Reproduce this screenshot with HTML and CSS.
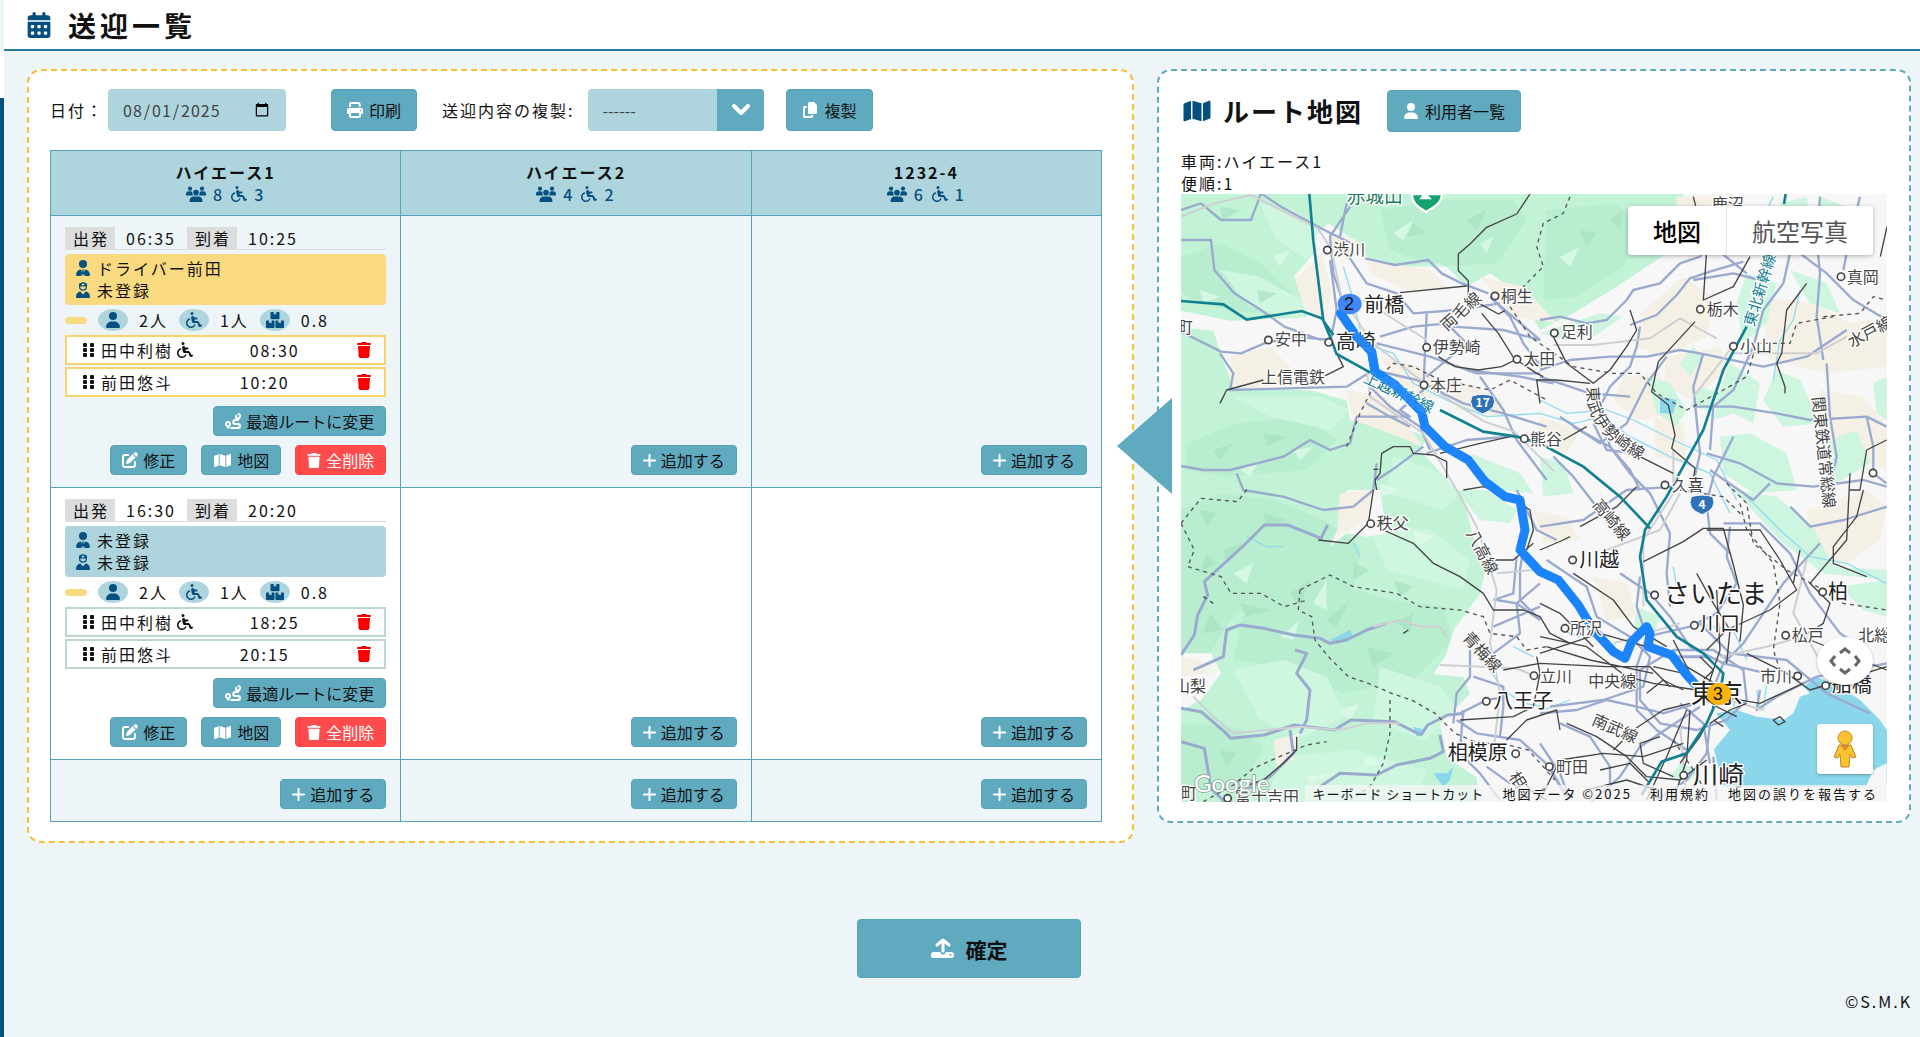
FILE: index.html
```html
<!DOCTYPE html>
<html lang="ja">
<head>
<meta charset="utf-8">
<title>送迎一覧</title>
<link rel="stylesheet" href="styles.css">
</head>
<body>
<svg class="defs" aria-hidden="true">
  <symbol id="calendar" viewBox="0 0 448 512"><path d="M128 0c17.700 0 32 14.300 32 32V64H288V32c0-17.700 14.300-32 32-32s32 14.300 32 32V64h48c26.500 0 48 21.500 48 48v48H0V112C0 85.500 21.500 64 48 64H96V32c0-17.700 14.300-32 32-32zM0 192H448V464c0 26.500-21.500 48-48 48H48c-26.500 0-48-21.500-48-48V192zm64 80v32c0 8.800 7.200 16 16 16h32c8.800 0 16-7.200 16-16V272c0-8.800-7.200-16-16-16H80c-8.800 0-16 7.200-16 16zm128 0v32c0 8.800 7.200 16 16 16h32c8.800 0 16-7.200 16-16V272c0-8.800-7.200-16-16-16H208c-8.800 0-16 7.200-16 16zm144-16c-8.800 0-16 7.200-16 16v32c0 8.800 7.200 16 16 16h32c8.800 0 16-7.200 16-16V272c0-8.800-7.200-16-16-16H336zM64 400v32c0 8.800 7.200 16 16 16h32c8.800 0 16-7.200 16-16V400c0-8.800-7.200-16-16-16H80c-8.800 0-16 7.200-16 16zm144-16c-8.800 0-16 7.200-16 16v32c0 8.800 7.200 16 16 16h32c8.800 0 16-7.200 16-16V400c0-8.800-7.200-16-16-16H208zm112 16v32c0 8.800 7.200 16 16 16h32c8.800 0 16-7.200 16-16V400c0-8.800-7.200-16-16-16H336c-8.800 0-16 7.200-16 16z"/></symbol>
  <symbol id="print" viewBox="0 0 512 512"><path d="M128 0C92.700 0 64 28.700 64 64v96h64V64H354.700L384 93.300V160h64V93.300c0-17-6.700-33.300-18.700-45.300L400 18.700C388 6.700 371.700 0 354.700 0H128zM384 352v96H128V352H384zm64 32h32c17.700 0 32-14.300 32-32V256c0-35.300-28.700-64-64-64H64c-35.300 0-64 28.700-64 64v96c0 17.700 14.300 32 32 32H64v64c0 35.300 28.700 64 64 64H384c35.300 0 64-28.700 64-64V384zM432 248a24 24 0 1 1 0 48 24 24 0 1 1 0-48z"/></symbol>
  <symbol id="copy" viewBox="0 0 448 512"><path d="M208 0H332c13 0 25 5 34 14l68 68c9 9 14 21 14 34V336c0 26-22 48-48 48H208c-26 0-48-22-48-48V48c0-26 22-48 48-48zM48 128h80v64H64V448H256V416h64v48c0 26-22 48-48 48H48c-26 0-48-22-48-48V176c0-26 22-48 48-48z"/></symbol>
  <symbol id="user" viewBox="0 0 448 512"><path d="M224 256A128 128 0 1 0 224 0a128 128 0 1 0 0 256zm-46 48C80 304 0 384 0 482c0 17 13 30 30 30H418c17 0 30-13 30-30C448 384 368 304 270 304H178z"/></symbol>
  <symbol id="map" viewBox="0 0 576 512"><path d="M384 476L192 421V36L384 91V476zm32-1V88L543 37c16-6 33 6 33 23V395c0 9-6 18-15 22L416 475zM15 95L160 37V424L33 475C17 481 0 469 0 452V117c0-9 6-18 15-22z"/></symbol>
  <symbol id="trash" viewBox="0 0 448 512"><path d="M135 18L128 32H32C14 32 0 46 0 64S14 96 32 96H416c18 0 32-14 32-32s-14-32-32-32H320l-7-14C307 7 296 0 284 0H164c-12 0-23 7-29 18zM416 128H32L53 467c2 25 23 45 48 45H347c25 0 46-20 48-45L416 128z"/></symbol>
  <symbol id="plus" viewBox="16 48 416 416"><path d="M256 80c0-18-14-32-32-32s-32 14-32 32V224H48c-18 0-32 14-32 32s14 32 32 32H192V432c0 18 14 32 32 32s32-14 32-32V288H400c18 0 32-14 32-32s-14-32-32-32H256V80z"/></symbol>
  <symbol id="edit" viewBox="0 0 512 512"><path d="M471.600 21.700c-21.900-21.900-57.300-21.900-79.200 0L362.300 51.700l97.900 97.900 30.100-30.100c21.900-21.900 21.900-57.300 0-79.200L471.600 21.700zm-299.200 220c-6.100 6.100-10.800 13.600-13.500 21.900l-29.600 88.800c-2.900 8.600-.6 18.100 5.800 24.600s15.900 8.700 24.600 5.800l88.800-29.600c8.200-2.700 15.700-7.400 21.900-13.500L437.700 172.300 339.700 74.300 172.400 241.700zM96 64C43 64 0 107 0 160V416c0 53 43 96 96 96H352c53 0 96-43 96-96V320c0-17.700-14.300-32-32-32s-32 14.300-32 32v96c0 17.700-14.300 32-32 32H96c-17.700 0-32-14.300-32-32V160c0-17.700 14.300-32 32-32h96c17.700 0 32-14.300 32-32s-14.300-32-32-32H96z"/></symbol>
  <symbol id="wheelchair" viewBox="0 0 512 512"><path d="M192 96a48 48 0 1 0 0-96 48 48 0 1 0 0 96zM120.500 247.200c12.400-4.700 18.700-18.500 14-30.900s-18.500-18.700-30.900-14C43.100 225.100 0 283.500 0 352c0 88.400 71.600 160 160 160c61.200 0 114.300-34.300 141.200-84.700c6.200-11.700 1.800-26.200-9.900-32.500s-26.200-1.800-32.500 9.900C240 440 202.800 464 160 464C98.100 464 48 413.900 48 352c0-47.900 30.100-88.800 72.500-104.800zM259.800 176l-1.900-9.700c-4.500-22.300-24-38.300-46.800-38.300c-30.100 0-52.700 27.500-46.800 57l23.100 115.500c6 29.900 32.200 51.400 62.800 51.400h100.500c6.700 0 12.600 4.100 15 10.400L402 459.200c6 16.100 23.800 24.600 40.100 19.100l48-16c16.800-5.600 25.800-23.700 20.200-40.500s-23.700-25.800-40.500-20.200l-18.700 6.200-25.500-68c-11.700-31.200-41.600-51.900-74.900-51.900H282.200l-9.600-48H336c17.700 0 32-14.300 32-32s-14.300-32-32-32H259.800z"/></symbol>
  <symbol id="users" viewBox="0 0 640 512"><circle cx="128" cy="84" r="68"/><circle cx="512" cy="84" r="68"/><circle cx="320" cy="212" r="90"/><path d="M0 250c0-50 40-82 82-82h64c24 0 46 10 60 24-10 46 0 86 28 114H22c-12 0-22-10-22-22zM640 250c0-50-40-82-82-82h-64c-24 0-46 10-60 24 10 46 0 86-28 114h212c12 0 22-10 22-22zM112 476c0-78 58-142 134-142h148c76 0 134 64 134 142 0 20-12 36-32 36H144c-20 0-32-16-32-36z"/></symbol>
  <symbol id="tie" viewBox="0 0 448 512"><circle cx="224" cy="128" r="128"/><path d="M150 300C66 312 0 386 0 474c0 22 14 38 36 38h134l30-118zM298 300c84 12 150 86 150 174 0 22-14 38-36 38H278l-30-118zM184 300h80l-22 44 20 90-38 78-38-78 20-90z"/></symbol>
  <symbol id="nurse" viewBox="0 0 448 512"><path fill-rule="evenodd" d="M96 60C96 44 224 0 224 0s128 44 128 60v90a128 128 0 0 1-256 0zm40 84v10a88 88 0 0 0 176 0v-10zM208 40v26h-26v26h26v26h32V92h26V66h-26V40z"/><path d="M134 306l90 94 90-94c76 10 134 78 134 164 0 26-14 42-36 42H36c-22 0-36-16-36-42 0-86 58-154 134-164z"/></symbol>
  <symbol id="boxes" viewBox="0 0 576 512"><path d="M170 0h76v84l42-26 42 26V0h76c16 0 26 10 26 26v180c0 16-10 26-26 26H170c-16 0-26-10-26-26V26c0-16 10-26 26-26zM26 272h72v90l42-26 42 26v-90h66c16 0 26 10 26 26v188c0 16-10 26-26 26H26c-16 0-26-10-26-26V298c0-16 10-26 26-26zM328 272h66v90l42-26 42 26v-90h72c16 0 26 10 26 26v188c0 16-10 26-26 26H328c-16 0-26-10-26-26V298c0-16 10-26 26-26z"/></symbol>
  <symbol id="route" viewBox="0 0 512 512"><path fill-rule="evenodd" d="M416 0a96 96 0 0 1 96 96c0 50-60 130-96 160H328a28 28 0 0 0 0 64h88a96 96 0 0 1 0 192H140c18-20 34-42 46-64h230a30 30 0 0 0 0-64h-88a92 92 0 0 1 0-192h8c-10-22-16-40-16-56a96 96 0 0 1 96-96zm0 58a38 38 0 1 0 1 0zM96 256a96 96 0 0 1 96 96c0 54-62 124-96 160-34-36-96-106-96-160a96 96 0 0 1 96-96zm0 60a36 36 0 1 0 1 0z"/></symbol>
  <symbol id="grip" viewBox="0 0 12 14"><rect width="4" height="4" rx="1"/><rect x="7" width="4" height="4" rx="1"/><rect y="5" width="4" height="4" rx="1"/><rect x="7" y="5" width="4" height="4" rx="1"/><rect y="10" width="4" height="4" rx="1"/><rect x="7" y="10" width="4" height="4" rx="1"/></symbol>
  <symbol id="chevron" viewBox="0 0 20 14"><path d="M3 3l7 7 7-7" fill="none" stroke="currentColor" stroke-width="4" stroke-linecap="round" stroke-linejoin="round"/></symbol>
  <symbol id="upload" viewBox="0 0 23 21"><path fill-rule="evenodd" d="M3 14h17a3 3 0 0 1 3 3v1a2 2 0 0 1-2 2H2a2 2 0 0 1-2-2v-1a3 3 0 0 1 3-3zm16 2a1 1 0 1 0 1 0z"/><path d="M12 14V3" fill="none" stroke="#60aac0" stroke-width="5" stroke-linecap="round"/><path d="M12 13V2M6 7l6-5 6 5" fill="none" stroke="currentColor" stroke-width="3" stroke-linecap="round" stroke-linejoin="round"/></symbol>
</svg>

<div class="app">
  <aside class="side-edge"></aside>
  <div class="page">
    <header class="page-header">
      <svg class="icon-title"><use href="#calendar"/></svg>
      <h1>送迎一覧</h1>
    </header>

    <main class="content">
      <div class="panels">
        <section class="panel panel-schedule">
          <form class="toolbar">
            <label for="date">日付：</label>
            <input class="date" id="date" type="date" value="2025-08-01">
            <button class="btn btn-lg btn-print" type="button"><svg class="ico"><use href="#print"/></svg>印刷</button>
            <label class="copy-label" for="source">送迎内容の複製:</label>
            <span class="select-box">
              <select id="source"><option>------</option></select>
              <span class="select-arrow"><svg class="ico-chevron"><use href="#chevron"/></svg></span>
            </span>
            <button class="btn btn-lg btn-copy" type="button"><svg class="ico"><use href="#copy"/></svg>複製</button>
          </form>

          <table class="schedule">
            <thead>
              <tr>
                <th scope="col">ハイエース1<span class="capacity"><svg class="ico-users"><use href="#users"/></svg>8<svg class="ico"><use href="#wheelchair"/></svg>3</span></th>
                <th scope="col">ハイエース2<span class="capacity"><svg class="ico-users"><use href="#users"/></svg>4<svg class="ico"><use href="#wheelchair"/></svg>2</span></th>
                <th scope="col">1232-4<span class="capacity"><svg class="ico-users"><use href="#users"/></svg>6<svg class="ico"><use href="#wheelchair"/></svg>1</span></th>
              </tr>
            </thead>
            <tbody>
              <tr>
                <td>
                  <div class="times"><span class="tag">出発</span><span>06:35</span><span class="tag">到着</span><span>10:25</span></div>
                  <div class="crew crew-active">
                    <div><svg class="ico"><use href="#tie"/></svg>ドライバー前田</div>
                    <div><svg class="ico"><use href="#nurse"/></svg>未登録</div>
                  </div>
                  <div class="counts"><i class="dash"></i><span class="oval"><svg class="ico"><use href="#user"/></svg></span><span>2人</span><span class="oval"><svg class="ico"><use href="#wheelchair"/></svg></span><span>1人</span><span class="oval"><svg class="ico-users"><use href="#boxes"/></svg></span><span>0.8</span></div>
                  <ul class="riders riders-active">
                    <li><span class="rider"><svg class="ico-grip"><use href="#grip"/></svg>田中利樹<svg class="ico"><use href="#wheelchair"/></svg></span><span>08:30</span><button class="remove" type="button" aria-label="削除"><svg class="ico"><use href="#trash"/></svg></button></li>
                    <li><span class="rider"><svg class="ico-grip"><use href="#grip"/></svg>前田悠斗</span><span>10:20</span><button class="remove" type="button" aria-label="削除"><svg class="ico"><use href="#trash"/></svg></button></li>
                  </ul>
                  <div class="actions"><button class="btn" type="button"><svg class="ico"><use href="#route"/></svg>最適ルートに変更</button></div>
                  <div class="actions"><button class="btn" type="button"><svg class="ico"><use href="#edit"/></svg>修正</button><button class="btn" type="button"><svg class="ico-map"><use href="#map"/></svg>地図</button><button class="btn btn-danger" type="button"><svg class="ico-trash"><use href="#trash"/></svg>全削除</button></div>
                </td>
                <td><div class="actions"><button class="btn" type="button"><svg class="ico-plus"><use href="#plus"/></svg>追加する</button></div></td>
                <td><div class="actions"><button class="btn" type="button"><svg class="ico-plus"><use href="#plus"/></svg>追加する</button></div></td>
              </tr>
              <tr>
                <td>
                  <div class="times"><span class="tag">出発</span><span>16:30</span><span class="tag">到着</span><span>20:20</span></div>
                  <div class="crew">
                    <div><svg class="ico"><use href="#tie"/></svg>未登録</div>
                    <div><svg class="ico"><use href="#nurse"/></svg>未登録</div>
                  </div>
                  <div class="counts"><i class="dash"></i><span class="oval"><svg class="ico"><use href="#user"/></svg></span><span>2人</span><span class="oval"><svg class="ico"><use href="#wheelchair"/></svg></span><span>1人</span><span class="oval"><svg class="ico-users"><use href="#boxes"/></svg></span><span>0.8</span></div>
                  <ul class="riders">
                    <li><span class="rider"><svg class="ico-grip"><use href="#grip"/></svg>田中利樹<svg class="ico"><use href="#wheelchair"/></svg></span><span>18:25</span><button class="remove" type="button" aria-label="削除"><svg class="ico"><use href="#trash"/></svg></button></li>
                    <li><span class="rider"><svg class="ico-grip"><use href="#grip"/></svg>前田悠斗</span><span>20:15</span><button class="remove" type="button" aria-label="削除"><svg class="ico"><use href="#trash"/></svg></button></li>
                  </ul>
                  <div class="actions"><button class="btn" type="button"><svg class="ico"><use href="#route"/></svg>最適ルートに変更</button></div>
                  <div class="actions"><button class="btn" type="button"><svg class="ico"><use href="#edit"/></svg>修正</button><button class="btn" type="button"><svg class="ico-map"><use href="#map"/></svg>地図</button><button class="btn btn-danger" type="button"><svg class="ico-trash"><use href="#trash"/></svg>全削除</button></div>
                </td>
                <td><div class="actions"><button class="btn" type="button"><svg class="ico-plus"><use href="#plus"/></svg>追加する</button></div></td>
                <td><div class="actions"><button class="btn" type="button"><svg class="ico-plus"><use href="#plus"/></svg>追加する</button></div></td>
              </tr>
              <tr>
                <td><div class="actions"><button class="btn" type="button"><svg class="ico-plus"><use href="#plus"/></svg>追加する</button></div></td>
                <td><div class="actions"><button class="btn" type="button"><svg class="ico-plus"><use href="#plus"/></svg>追加する</button></div></td>
                <td><div class="actions"><button class="btn" type="button"><svg class="ico-plus"><use href="#plus"/></svg>追加する</button></div></td>
              </tr>
            </tbody>
          </table>
        </section>

        <section class="panel panel-map">
          <span class="pointer"></span>
          <div class="map-head">
            <svg class="icon-map-title"><use href="#map"/></svg>
            <h2>ルート地図</h2>
            <button class="btn btn-lg" type="button"><svg class="ico"><use href="#user"/></svg>利用者一覧</button>
          </div>
          <p class="map-info">車両:ハイエース1<br>便順:1</p>
          <div class="map">
            <svg class="map-canvas" viewBox="3 12 2118 1824" preserveAspectRatio="xMidYMid slice">
              <rect width="2130" height="1850" fill="#c3f3d7"/>
              <!-- darker woodland -->
              <g fill="#b8eecf">
                <path d="M600 60l180-30 220 0 40 60-90 130-180 10-140-50z"/>
                <path d="M3 200l120-40 120 60 90 90-100 60-140-20-90-40z"/>
                <path d="M20 760l150-60 200-20 100 70-90 90-240 20-120-20z"/>
                <path d="M3 960l120-50 160 20 150 60 110 80-20 120-160 60-200 20-90 150-70 60z"/>
                <path d="M210 1180l220-10 200 60 160 20 30 100-120 120-210 40-180-80-150-20z"/>
                <path d="M1100 60l200-20 90 60-60 130-140 90-100 10z"/>
                <path d="M3 1600l160 10 90 60-70 120-180 10z"/>
              </g>
              <!-- pale slopes -->
              <g fill="#cff6df">
                <path d="M240 40l100 20 100 60-60 90-90-60z"/>
                <path d="M500 140l60 60 130 30 90-10 60 60-120-20-200-40z"/>
                <path d="M120 240l120 20 140 80-10 50-160-40z"/>
                <path d="M160 620l260 0 90 40-60 60-180-40z"/>
                <path d="M160 1440l150-30 130 50 60 120-130 60-130-50z"/>
                <path d="M600 1430l180 60 60 80-110 80-150-60z"/>
                <path d="M300 1700l220-20 220 60-40 100H260z"/>
                <path d="M640 800l120 40 90 60-60 60-170-50z"/>
                <path d="M560 1000l190 20 120 90-20 90-230-60z"/>
              </g>
              <!-- plain -->
              <path fill="#f7f7f7" d="M395 150l50-50 75 50 50 60 100 20 130 0 60 60 70-40 90 60 60 110 100-50 130-80 180-120 20-158h715v1830H900l-10-80-90-60-20-100 50-50 40-40-20-50-90-10 40-60 20-70 50-70 30-40 20-90-40-80-30-120-130-140 20-40-120-50-110 0-10-60-100-30-240-10-30-80-30-90-100-10v-50l150 30 230-10 20-90-60-30 60-70z"/>
              <path fill="#f7f7f7" d="M3 1390l90 0 30 60-60 80-60 30zM500 900h100l20 130-60 10-60-10-50 40 40-90z"/>
              <!-- farmland -->
              <g fill="#f5f0e5">
                <path d="M345 270l80-80 30 110-20 100-60-40z"/>
                <path d="M150 500l120-30 90 90-130 40-80-20z"/>
                <path d="M600 500l120 30 90 90-130 20zM800 560l160 60 20 60-150-20z"/>
                <path d="M560 210l190 30 60 60-130 0-110-50z"/>
                <path d="M500 600l120 20 110 150-100-40-110-40z"/>
                <path d="M900 260l130 30 100 110-130-20z"/>
                <path d="M1490 20l130 0 10 160-100 30-40-80z"/>
                <path d="M1380 370l130-110 90 60-20 120-130 60-80-30z"/>
                <path d="M1740 320l160 20 110 60 110-20v150l-180 20-170-40z"/>
                <path d="M1330 560l110-10 40 120-110 20-70-60z"/>
                <path d="M1460 500l160-30 30 70-120 90-80-50z"/>
                <path d="M1920 600l130 20 70 90v130l-130-40-80-100z"/>
                <path d="M1080 680l120 40-40 70-90-30zM1420 680l90 20 10 120-90-20z"/>
                <path d="M1880 960l180-60 60 50-20 100-110 80-90-70z"/>
                <path d="M1060 960l100 20 40 70-110 10zM1240 1160l100 20 30 100-90 10z"/>
                <path d="M480 910l100-10-20 90-90 50zM280 1650l80-20-20 80-50 20zM3 1400l90 20 10 30-100 10z"/>
                <path d="M440 120l90 30 10 50-70-10z"/>
              </g>
              <!-- parks and paddies -->
              <g fill="#cdf5df">
                <path d="M1080 430l180-60 70 10-90 60-80 10z"/>
                <path d="M1400 560l70 20 50 80-30 50-60-40zM1560 590l60 20-30 50-60-10zM1500 520l40-50 30 30-40 60z"/>
                <path d="M1700 250l90 30-30 120-70 60-20-120zM1830 240l110 40 40 90-90-30z"/>
                <path d="M1650 520l90 60-20 120-60-30-60 20 20-90zM1790 540l70 30 60 130-110 10-60-80z"/>
                <path d="M1620 740l90-10 110 60 30 110-130 10-90-60zM1930 760l100-40 40 100-100 60z"/>
                <path d="M2080 580l40-20v130l-30-20zM1800 40l80-20 20 140-70 20z"/>
                <path d="M1660 900l130 20 110 90 60 120 160 10v30l-190-20-120-90z"/>
                <path d="M1980 1190l140-20v110l-70-20zM1370 1250l70 30-20 60-60-20z"/>
                <path d="M870 790l150 60 40 60-110-10zM830 900l90 0 90 60-20 40-90-10z"/>
                <path d="M1080 800l70 20 30 90-90 10zM1500 1720l60 20-40 40-50-20z"/>
                <path d="M1920 20l80 30-10 120-60 10z"/>
              </g>
              <!-- relief shadows -->
              <g fill="#a3dfbe" opacity=".6">
                <path d="M60 960l50 10-30 40zM130 1080l60-20-50 60zM250 970l70 20-60 20zM330 1210l60-40-30 80zM440 1290l70-60-40 80zM180 1240l90 20-70 20zM90 1270l40 50-60 10zM560 1370l80 20-60 40zM650 1300l50-30-10 60zM60 1150l20-60 30 30zM120 50l60 10-50 30zM700 100l40 30-60 10zM860 90l60-30-30 60zM230 300l60 10-50 30zM100 780l60-20-40 50zM250 730l70 10-60 30zM520 1120l50 20-50 30zM640 1170l60 20-40 30zM120 1680l50 10-30 40zM1200 120l50 10-30 40zM1290 90l40-30-10 60z"/>
              </g>
              <g fill="#e2fbec" opacity=".7">
                <path d="M160 1150l60-30-20 60zM400 1240l40-70 0 90zM300 1340l60-50-20 60zM80 1430l40 10-40 20zM480 1560l60-20-30 50zM380 1760l90-10-80 30zM560 1700l60 20-70 10zM60 300l60 20-50 20zM280 200l50-20-30 50zM640 130l60-40-30 60zM900 160l40-20-20 50zM180 840l60-30-30 50zM340 780l60-10-40 40zM600 880l60 20-60 20zM700 1020l60 20-50 30zM1140 200l60-30-30 60z"/>
              </g>
              <!-- bay and lakes -->
              <path fill="#8ad7ec" d="M1610 1570l60-10 60 20 80 10 30-20 20-50 30-10-20-20 40-30 70 30 60 40 60 60 60 90-10 110h-520l-30-120 30-60-40-40z"/>
              <path fill="#8ad7ec" d="M1440 620l50 10-10 40-40 0zM450 1350l60-30 10 20-50 20zM760 1750l40 0 20-20-10 40-20 20zM700 1610l40 10-30 20z"/>
              <path fill="#f7f7f7" d="M1600 1560l50 60-50 60-20 180-20-220zM2080 1740l40-20v110h-80z"/>
              <!-- rivers -->
              <g fill="none" stroke="#8fdcef" stroke-width="4">
                <path d="M490 230l30 100 30 130 90 30 60 90 120 60 100 40 160-10 100 30 90-20 80 60 120 60 120 50 60 120"/>
                <path d="M1080 630l80 40 120-10 80 30 120 60 130 60 60 120"/>
                <path d="M1780 20l-30 60M1860 300l-20 90-40 60-20 120M1680 900l120 120 90 80 110 20 120 60"/>
                <path d="M930 1440l40 60 60 40 60 10M1090 1560l80-30M1060 1400l-60-30M1140 1320l60 20M1480 1130l10 60"/>
                <path d="M1730 1500l10 60M1760 1480l-10 80M1680 1500l-20 50M1540 1300l120 20 40 90M200 1040l60 30 50 0M520 1060l20 40"/>
              </g>
              <!-- highways -->
              <g class="road">
                <path d="M3 60l60-20 60 50 90 0 30-80 60 40 130 70 80 40M3 150h90l10 90 60 70 80 50 70 50 110 40"/>
                <path d="M530 20l-40 60-40 60 10 110 30 90M500 40l-20 100M555 205l90 20 100-15 40 40 60 30 80 30"/>
                <path d="M500 190l60 90 90 30 50 60 130-10 130-20M450 210l20 150-20 100M3 425l120 60 60 5 70-30 90-20 110 10"/>
                <path d="M120 490l40 60-10 50 350-10 80-50 130 30 140 70 120 30 130 40"/>
                <path d="M600 440l100-30 100-10 60 60-120 100M740 370l-10 230-70 60 30 20-160 0-20 80-60 20-60-30-80 50-160 40-80 0-110-20"/>
                <path d="M170 850l20 50 120 20 120 40 90-10 60-50 10-80M590 870l60-40 80-60"/>
                <path d="M590 460l160 40 140 50 190 0M820 410l150 10 110 30M900 560l70 100 40 90 90 120M570 590l60 60 90 60 30 70"/>
                <path d="M560 640l70 40 60 30M740 790l120-40 130-10M860 540l160 20 100 20"/>
                <path d="M930 320l60 60 40 80 60 80M940 330l140 120M1080 390l60-10 80 20 60-10 60-60 20-30 80-20 60-60 60-20 40-60"/>
                <path d="M1080 540l90-30 120-10 110 0 100-20 60 10 190 40 130-30 120-80M1380 410l-10 60-20 60-60 60-30 60 30 120 60 70 30 60"/>
                <path d="M1350 405l80-30 60-60 40-50 60-20 100-30M1540 270l120-20 80 20M1540 60l60 110 100 80M1830 190l-20 90-60 80-30 110-60 130-60 50-10 130"/>
                <path d="M1660 740l-60 120-20 80 10 90 60 60M1570 490l-30 100 20 200-20 90M1540 650l120 0 130 20 100 20 170-10 60 30"/>
                <path d="M1860 190l80 60 80 80 100 60M1920 20l-10 130 10 100-10 130 20 130M2040 20l-30 120-20 100M1940 520l10 160 20 120-30 130"/>
                <path d="M2060 680l20 90 0 80 40 30M1580 790l100 30 110 60 110 10 150-20 70 20M1590 840l130 90 50-50"/>
                <path d="M1460 500l-60 80-60 120-80 60-120-80M1080 560l150 50 120 10"/>
                <path d="M1180 710l110 60 60 80 60 60 60 120-10 120 10 100M1240 700l40 80 90 10"/>
                <path d="M1080 1010l130-20 130-90 140-10M1120 800l60 60 70 90 60 70"/>
                <path d="M1630 1000l110 0 90 90 60 120 90 120 90 60M1650 1010l-10 90 30 80-60 90-80 40-130 30"/>
                <path d="M1920 1060l-110 120-60 90-60 90-60 60-40 100M1320 1150l90 60 60 70 60 90 100 50 130 30"/>
                <path d="M1100 1110l120 80 30 90 100 60 60 60-20 90-120 40-160 20"/>
                <path d="M1380 1160l-10 90 30 90-30 90 0 130 60 60 90 60"/>
                <path d="M1080 1570l110-10 90-30 90 20 80 20 100-30M1380 1440l100-60 120 0 90 60 10 90-60 60-90 30-110-20-60-70z"/>
                <path d="M1560 1550l-90 60-90 60-60 90-90 80M1590 1600l-10 90-60 80-90 60M1600 1700l10 130"/>
                <path d="M1740 1500l-10 60 60-40 120-60 210-40M1500 1540l70 60 20 120M1560 1300l90 90 170 20 120 100 130 60"/>
                <path d="M2121 950l-130 40-100 20-60-60M1080 1660l60 90 30 80M1140 1600l90 40 60 90 0 100"/>
                <path d="M1010 900l60 120 60 30M1040 1010l-20 130 0 90 60 60M1010 1100l-10 110-60 20M1080 1180l-70 60 10 90-80 60"/>
                <path d="M940 1310l140-60M950 1230l60 10 70 50M870 1380l0 80-40 50-10 90M880 1460l90 30 0 60-10 90"/>
                <path d="M840 1570l80-40 60-10M830 1590l60 40 130 20 100 90M840 1690l60 60 60 80M920 1730l70 50M850 1560l-10 120"/>
              </g>
              <g class="road road-major">
                <path d="M3 1555l60 10 70 60 20 20 100-10 90-30 120 15 50-30 130 5 80 40 20-30 60-30 50-5"/>
                <path d="M3 1395l40-60 10-60 30-60-10-40 120-110 60-60 70 0 50 20 50 20 20-40M40 1440l90-40 10-80 40-15 70 10 90 20 80 10 30 15 50-10 60-30 60-20"/>
                <path d="M345 1380l35 10-30 60 40 50-10 90-20 40M330 1620l10 70-70 70-90 50M3 1655l70 20 20 120 40 40"/>
                <path d="M420 1790l60-40 110 5 60-30 100-20 40-20-10-50M1470 1400l110 0M1100 1720l60 100"/>
              </g>
              <!-- local roads -->
              <g fill="none" stroke="#cfcfd3" stroke-width="6">
                <path d="M3 80l100-40 110-25 60 30 140 70 40 60 30 140 90 140 180 140 160 100 90 30 120 120"/>
                <path d="M550 330l190 120M560 540l10 80 160 110 100 170 60 110 30 90 30 100-20 160 30 150-20 180"/>
                <path d="M1120 465l120 0 170-20 90-60 110 60M1660 490l250 0 90-50M1540 620l110-140M1480 780l0 130-90 140 0 200"/>
                <path d="M1930 1430l-90-160 40-160M1620 1400l140-30 140-40M780 1425l230 10 70 30M580 1310l80-20 60 20 60 0 20 30M950 1150l110-10"/>
                <path d="M1540 1500l210 60M1500 1600l20 230M40 1520l60 60 60 50 200-20 120 10 80-20 100 0"/>
                <path d="M1280 1080l160-60 60-110M1300 1360l200-60"/>
              </g>
              <!-- prefectural borders -->
              <g fill="none" stroke="#555" stroke-width="4" stroke-dasharray="12 12">
                <path d="M1170 20l-20 50-60 30-20 70 20 60-60 60M3 1000l60-75 110 10 30-40M3 1000l40 80-20 50 100 30 30 50 90 0 70 40 70-20M360 1200l90-45 70 35 130 20 70 40 120 10 70 20 20 50 80 10 30 40 60-10"/>
                <path d="M360 1200l-5 60 40 20 10 70 40 50 60 60 60 20 70 30 60 20 70 40 60 60 70 30 70 0 80 20 80 90"/>
                <path d="M630 1530l0 100-20 90-40 70-60 40M70 1835l90-50 60-50 90-40 70-30 60-10"/>
                <path d="M500 770l40-100 50-100 50-50 60 10 80 40 150 30 60-30 110 60M990 350l60 90 130 90 120 20 80 0 50 60 90 50 110-60 70-40 30-100 100 0 20-60 110-20"/>
                <path d="M1640 880l60 60 20 120 100 80 110 60 60 40 130 20M1500 900l130 20 60 60M1680 940l20 80 80 100 20 120-20 140 20 60M1930 380l110-10 40-50 40 10M1480 1650l60 90 40 70M70 1220l30 20"/>
              </g>
              <!-- railways -->
              <g class="rail">
                <path d="M1050 12l-40 60-90 40-50 50-35 30 0 50 30 30 0 50 90 50 20-10M660 308l200-20M905 370l50 60 50 80-40 20-70 10-70-10-50-30M1010 510l60 40 20 10M120 640l20-40 110-30M430 560l60-30-20-40"/>
                <path d="M590 900l-5-30 15-20 5-60 35-20 50 0 10 20 60 5 40 20 0 50M580 900l-15 100-60 60-90-10M610 1020l90 40 60 60 80 40 70 50 30 50 90 0 50 20 30 50 60 30"/>
                <path d="M780 790l120-30 90-20 40 0M1080 640l-10-70 60 0 100 10M1120 440l40 80 80 60 50-40 50-70 30-50-20-60M1150 750l70-40M1380 800l100 50M1540 20l40 160-10 150 90-40 50-90"/>
                <path d="M1545 395l-110 120-20 90 50 40 20 90-10 40 70 60-10 70M1880 280l-60 80-15 130-15 30 25 70 0 20M1200 1010l110-60 60-60M2121 110l-20 90"/>
                <path d="M2010 900l30 0 20-120 60-30M2050 900l-20 80-70 90 0 50 100 40M2010 850l-10 200-110 130 60 60-20 60-80 50"/>
                <path d="M850 900l60-10 80 30 60 40 10 60-20 60M1060 1060l-60 50-60 0M1080 1080l70-30 20-10M1180 1150l120 80 60 80 100 60M1080 1240l60 30 100 100"/>
                <path d="M1390 1115l120-60 60-40 60 0 30 110 30 120-10 110M1580 1020l160 0 60 90 50 90-80 60-130 60-60 60M1860 1080l-20 100M1550 1150l50 90 50 80-10 100"/>
                <path d="M970 1440l110-20 200 10 130 0 60 60M1080 1340l140 30 120 90 80 20 130 20M1080 1390l180-60 140 40 120 60 100 60M1100 1370l130 40 190 40"/>
                <path d="M840 1590l160-10 60-30 20-100-10-50M980 1650l60-60 90-30 10 60M1010 1740l40 60 50 30M1080 1830l60-120 130-20 120 10 120-40"/>
                <path d="M1300 1680l60-60 90-60 80-20M1160 1600l90 40 90 60 60 60 100 10 80-60M1400 1830l60-130 60-140M1480 1830l40-120 10-150"/>
                <path d="M1420 1430l90 20 80 50 10 60-40 80-60 80M1480 1350l60 120 30 60 100 50M1610 1200l10 180-50 150M1700 1390l120 60 70 50 230-70M1890 1350l230 90M1620 1520l120 20 130-60"/>
                <path d="M1590 1600l60-40 50-20M1600 1590l30 20M1780 1590l20-10 15 15-20 10zM1260 1740l90-20 60 60M1220 1800l120-30 90 30M1440 1640l-60 20 10 60 90 40M1510 1500l-60-30-50 40M1560 1400l40 40-30 30"/>
                <path d="M160 1800l90-30 60-50 40-40 0-40M670 1330l15-10M580 838h15"/>
              </g>
              <!-- shinkansen lines -->
              <g fill="none" stroke="#138092" stroke-width="8">
                <path d="M388 12l12 140 30 240 25 60 15 40 100 55M3 333l127 10 70 46 165-26 60 22 35 50"/>
                <path d="M780 660l130 65 100 15 70 20 130 70 110 90 90 95"/>
                <path d="M1817 12l-5 30M1700 410l-70 130-60 180-110 200-65 100-15 80 20 130 90 110 80 50 60 60-10 60-40 90-60 90-75 25-60 100"/>
              </g>
              <!-- chosen route -->
              <path fill="none" stroke="#1b84fb" stroke-width="27" stroke-linejoin="round" stroke-linecap="round" d="M482 370l48 70 45 45 10 60 60 40 80 80 10 45 60 60 70 40 50 65 60 45 45 10 15 90-15 60 60 65 55 25 60 75 45 75 60 65 35 20 20-50 45-45 10 20-5 40 70 25 45 60 60 65"/>
              <g class="dots">
                <circle cx="442" cy="180" r="11"/><circle cx="945" cy="318" r="11"/><circle cx="265" cy="450" r="11"/><circle cx="446" cy="457" r="11"/><circle cx="740" cy="472" r="11"/><circle cx="1011" cy="508" r="11"/><circle cx="732" cy="585" r="11"/><circle cx="1033" cy="746" r="11"/>
                <circle cx="1983" cy="260" r="11"/><circle cx="1561" cy="358" r="11"/><circle cx="1660" cy="469" r="11"/><circle cx="1123" cy="429" r="11"/><circle cx="1455" cy="885" r="11"/><circle cx="2079" cy="849" r="11"/>
                <circle cx="572" cy="1001" r="11"/><circle cx="919" cy="1534" r="11"/><circle cx="1007" cy="1691" r="11"/><circle cx="143" cy="1825" r="11"/><circle cx="1062" cy="1457" r="11"/>
                <circle cx="1178" cy="1110" r="11"/><circle cx="1424" cy="1215" r="11"/><circle cx="1543" cy="1306" r="11"/><circle cx="1928" cy="1206" r="11"/><circle cx="1155" cy="1315" r="11"/><circle cx="1817" cy="1336" r="11"/><circle cx="1853" cy="1458" r="11"/><circle cx="1937" cy="1487" r="11"/><circle cx="1108" cy="1730" r="11"/><circle cx="1511" cy="1756" r="11"/>
              </g>
              <g class="town">
                <text x="460" y="196">渋川</text><text x="962" y="336">桐生</text><text x="285" y="466">安中</text><text x="758" y="488">伊勢崎</text><text x="1030" y="525">太田</text><text x="243" y="580">上信電鉄</text><text x="750" y="602">本庄</text><text x="1050" y="765">熊谷</text><text x="-10" y="430">町</text>
                <text x="1595" y="60">鹿沼</text><text x="2000" y="278">真岡</text><text x="1580" y="375">栃木</text><text x="1680" y="487">小山</text><text x="1142" y="445">足利</text><text x="1475" y="903">久喜</text>
                <text x="590" y="1018">秩父</text><text x="-18" y="1506">山梨</text><text x="3" y="1828">町</text><text x="165" y="1838">富士吉田</text><text x="1080" y="1475">立川</text>
                <text x="1170" y="1332">所沢</text><text x="1835" y="1354">松戸</text><text x="2035" y="1354">北総</text><text x="1225" y="1492">中央線</text><text x="1740" y="1475">市川</text><text x="1128" y="1748">町田</text>
                <text transform="translate(800 425) rotate(-42)">両毛線</text>
                <text transform="translate(2015 474) rotate(-28)">水戸線</text>
                <text transform="translate(858 1030) rotate(62)">八高線</text>
                <text transform="translate(845 1345) rotate(47)">青梅線</text>
                <text transform="translate(1235 945) rotate(50)">高崎線</text>
                <text transform="translate(1232 1602) rotate(24)">南武線</text>
                <text transform="translate(985 1760) rotate(55)">相</text>
                <path id="isesaki" fill="none" stroke="none" d="M1222 590C1215 700 1290 760 1390 815"/>
                <text><textPath href="#isesaki">東武伊勢崎線</textPath></text>
                <text transform="translate(1897 622) rotate(84)">関東鉄道常総線</text>
              </g>
              <g class="town city">
                <text x="553" y="366">前橋</text><text x="467" y="478">高崎</text><text x="940" y="1553">八王子</text><text x="803" y="1710">相模原</text><text x="1198" y="1132">川越</text><text x="1560" y="1324">川口</text><text x="1944" y="1226">柏</text><text x="1955" y="1506">船橋</text>
              </g>
              <g class="town metro">
                <text x="1452" y="1238">さいたま</text><text x="1532" y="1540">東京</text><text x="1537" y="1784">川崎</text>
              </g>
              <g class="town bullet">
                <text transform="translate(548 575) rotate(25)">上越新幹線</text>
                <text transform="translate(1722 412) rotate(-73)">東北新幹線</text>
                <text class="peak" x="500" y="38">赤城山</text>
              </g>
              <path d="M738 66c-20-14-42-24-42-54h90c0 28-26 40-48 54z" fill="#16a170" stroke="#fff" stroke-width="7"/><path d="M718 28l16-22 22 22z" fill="#fff"/>
              <g fill="#2f72b8" stroke="#fff" stroke-width="3"><path d="M876 618q32-10 64 0 16 36-32 54-48-18-32-54z"/><path d="M1534 920q32-10 64 0 16 36-32 54-48-18-32-54z"/></g>
              <g class="shield"><text x="908" y="652">17</text><text x="1566" y="957">4</text></g>
              <path fill="none" stroke="#1b84fb" stroke-width="27" stroke-linecap="round" stroke-linejoin="round" opacity=".9" d="M530 440l45 45 10 60 60 40 80 80"/>
              <ellipse cx="509" cy="342" rx="36" ry="31" fill="#4285f4"/><ellipse cx="1617" cy="1512" rx="37" ry="33" fill="#f9b208"/>
              <g class="stop"><text x="507" y="360">2</text><text x="1613" y="1530">3</text></g>
              <text class="logo" x="42" y="1806">Google</text>
            </svg>
            <div class="map-types"><button type="button" class="selected">地図</button><button type="button">航空写真</button></div>
            <button class="camera" type="button" aria-label="カメラ"><svg viewBox="0 0 32 28"><path d="M11 6l5-4 5 4M11 22l5 4 5-4M6 9l-4 5 4 5M26 9l4 5-4 5" fill="none" stroke="#666" stroke-width="3"/></svg></button>
            <button class="pegman" type="button" aria-label="ストリートビュー"><svg viewBox="0 0 24 38"><path d="M6 15h12l5 12-4 1-2-4-1 13H8L7 24l-2 4-4-1z" fill="#f9c22e" stroke="#bd842b"/><path d="M7 15h10l-5 6z" fill="#d98f2b"/><circle cx="12" cy="8" r="7" fill="#f9c22e" stroke="#c58a2c"/></svg></button>
            <div class="credits"><button type="button">キーボード ショートカット</button><span>地図データ ©2025</span><a href="#terms">利用規約</a><a href="#report">地図の誤りを報告する</a></div>
          </div>
        </section>
      </div>
      <button class="btn btn-confirm" type="button"><svg class="icon-upload"><use href="#upload"/></svg>確定</button>
    </main>
    <footer class="footer">©S.M.K</footer>
  </div>
</div>
</body>
</html>
```
FILE: styles.css
```css
* { box-sizing: border-box; }
body {
  margin: 0;
  background: #edf5f8;
  color: #111;
  font: 16px/22px "Noto Sans CJK JP", "Noto Sans", sans-serif;
  letter-spacing: 2px;
}
h1, h2, p, ul { margin: 0; padding: 0; }
button, input, select { font: inherit; color: inherit; }
svg { fill: currentColor; display: block; flex: none; }
.defs { position: absolute; width: 0; height: 0; }

.app { display: grid; grid-template-columns: 4px 1fr; min-height: 100vh; }
.side-edge { background: linear-gradient(#edf5f8 50px, #fff 50px 98px, #05507f 98px); }
.page-header {
  display: flex; align-items: center; gap: 16px;
  height: 51px; padding: 0 22px;
  background: #fff; border-bottom: 2px solid #27789c;
}
.icon-title { width: 26px; height: 26px; color: #05507f; }
h1 { font-size: 28px; line-height: 40px; letter-spacing: 4px; }

.content { padding: 18px 9px 0 23px; }
.panels { display: grid; grid-template-columns: 1107fr 754fr; gap: 23px; align-items: start; }
.panel { padding: 19px 22px; border: 2px dashed #f5be3b; border-radius: 14px; background: #fff; }
.panel-schedule { padding: 18px 30px 19px 21px; }
.panel-map { position: relative; border-color: #60aac0; }

.btn {
  display: inline-flex; align-items: center; justify-content: center; gap: 5px;
  height: 30px; padding: 0 11px;
  border: 1px solid #55a3b9; border-radius: 4px; background: #60aac0;
  letter-spacing: 0; white-space: nowrap;
}
.btn svg { color: #fff; }
.btn-lg { height: 42px; padding: 0 15px; gap: 6px; }
.btn-danger { background: #ff4b4b; border-color: #fa4545; color: #fff; }
.ico { width: 16px; height: 16px; }
.ico-users { width: 20px; height: 16px; }
.ico-map { width: 19px; height: 15px; }
.ico-trash { width: 14px; height: 15px; }
.ico-plus { width: 13px; height: 13px; }
.ico-grip { width: 12px; height: 14px; }
.ico-chevron { width: 20px; height: 14px; }

.toolbar { display: flex; align-items: center; }
.date { width: 178px; height: 42px; margin-left: 4px; padding: 0 14px; border: 0; border-radius: 4px; background: #aed5de; color: #444; letter-spacing: 1px; }
.btn-print { margin-left: 45px; }
.copy-label { margin-left: 25px; }
.select-box { position: relative; width: 176px; margin-left: 14px; }
.select-box select { width: 100%; height: 42px; padding: 0 14px; border: 0; border-radius: 4px; background: #aed5de; appearance: none; color: #444; letter-spacing: 0; }
.select-arrow { position: absolute; top: 0; right: 0; display: grid; place-items: center; width: 47px; height: 42px; border-radius: 0 4px 4px 0; background: #60aac0; color: #fff; pointer-events: none; }
.btn-copy { margin-left: 22px; }

.schedule { width: 100%; margin-top: 19px; border-collapse: collapse; table-layout: fixed; }
.schedule th, .schedule td { border: 1px solid #55a3b9; }
.schedule th { padding: 10px 0; background: #aed5de; }
.schedule td { padding: 11px 14px 12px; vertical-align: bottom; }
.schedule tbody tr:nth-child(odd) { background: #edf5f8; }
.schedule tbody tr:last-child td { padding-top: 10px; }
.capacity { display: flex; justify-content: center; align-items: center; gap: 7px; color: #05507f; font-weight: 500; }

.times { display: flex; gap: 11px; border-bottom: 1px solid #ddd; }
.tag { padding: 0 6px 0 8px; background: #ddd; }
.crew { margin-top: 4px; padding: 3px 10px 4px; border-radius: 4px; background: #aed5de; }
.crew-active { background: #f9da80; }
.crew div { display: flex; align-items: center; gap: 6px; }
.crew svg { color: #05507f; }
.counts { display: flex; align-items: center; gap: 11px; height: 22px; margin: 4px 0; }
.dash { width: 22px; height: 7px; border-radius: 4px; background: #f9da80; }
.oval { display: grid; place-items: center; width: 30px; height: 22px; border-radius: 50%; background: #aed5de; color: #05507f; }
.riders { display: grid; gap: 2px; list-style: none; }
.riders li { display: flex; align-items: center; justify-content: space-between; height: 30px; padding: 0 12px 0 16px; border: 2px solid #bfd6ce; background: #fff; }
.riders-active li { border-color: #f6d36b; }
.rider { display: flex; align-items: center; gap: 6px; }
.rider .ico { margin-left: -2px; }
.remove { padding: 0; border: 0; background: none; color: #f00; }
.actions { display: flex; justify-content: flex-end; gap: 14px; margin-top: 9px; }

.pointer { position: absolute; top: 327px; left: -42px; width: 55px; height: 96px; background: #60aac0; clip-path: polygon(0 50%, 100% 0, 100% 100%); }
.map-head { display: flex; align-items: center; gap: 10px; }
.map-head .btn { margin-left: 14px; }
.icon-map-title { width: 32px; height: 24px; color: #05507f; }
h2 { font-size: 26px; line-height: 42px; }
.map-info { margin-top: 18px; }
.map { position: relative; aspect-ratio: 706 / 608; overflow: hidden; letter-spacing: 0; }
.map-canvas { width: 100%; height: 100%; }
.road { fill: none; stroke: #9aaace; stroke-width: 7; stroke-linejoin: round; }
.road-major { stroke-width: 9; }
.rail { fill: none; stroke: #444; stroke-width: 4; stroke-linejoin: round; }
.dots { fill: #fff; stroke: #444; stroke-width: 5; }
.town { font-size: 48px; fill: #444; stroke: #fff; stroke-width: 8px; paint-order: stroke; stroke-linejoin: round; }
.city { font-size: 60px; fill: #222; }
.metro { font-size: 78px; fill: #222; }
.bullet { font-size: 45px; fill: #138092; }
.peak { font-size: 56px; fill: #1c7a5b; }
.shield { font-size: 36px; font-weight: 700; fill: #fff; text-anchor: middle; }
.stop { font: 54px "Liberation Sans", sans-serif; fill: #111; text-anchor: middle; }
.logo { font: 72px Lato, sans-serif; fill: #fff; stroke: #8aa396; stroke-width: 5px; paint-order: stroke; }

.map-types { position: absolute; top: 12px; right: 14px; display: flex; border-radius: 3px; background: #fff; box-shadow: 0 1px 4px rgba(0, 0, 0, .3); }
.map-types button { height: 49px; padding: 0 25px; border: 0; background: none; color: #565656; font-size: 24px; }
.map-types .selected { border-right: 1px solid #e6e6e6; color: #000; font-weight: 500; }
.camera, .pegman { position: absolute; right: 14px; display: grid; place-items: center; width: 56px; padding: 0; border: 0; background: #fff; box-shadow: 0 1px 3px rgba(0, 0, 0, .3); }
.camera { bottom: 117px; height: 48px; border-radius: 50%; }
.camera svg { width: 32px; height: 28px; }
.pegman { bottom: 28px; height: 50px; border-radius: 3px; }
.pegman svg { width: 24px; height: 38px; }
.credits { position: absolute; right: 0; bottom: 0; display: flex; gap: 18px; padding: 0 9px 0 7px; background: rgba(245, 245, 245, .75); font-size: 13px; line-height: 17px; letter-spacing: 2px; }
.credits button { padding: 0; border: 0; background: none; letter-spacing: 1px; }
.credits a { color: inherit; text-decoration: none; }

.btn-confirm { display: flex; gap: 12px; width: 224px; height: 59px; margin: 76px auto 0; font-size: 21px; font-weight: 700; }
.icon-upload { width: 23px; height: 21px; }
.footer { padding: 12px 8px 14px; text-align: right; }
```
